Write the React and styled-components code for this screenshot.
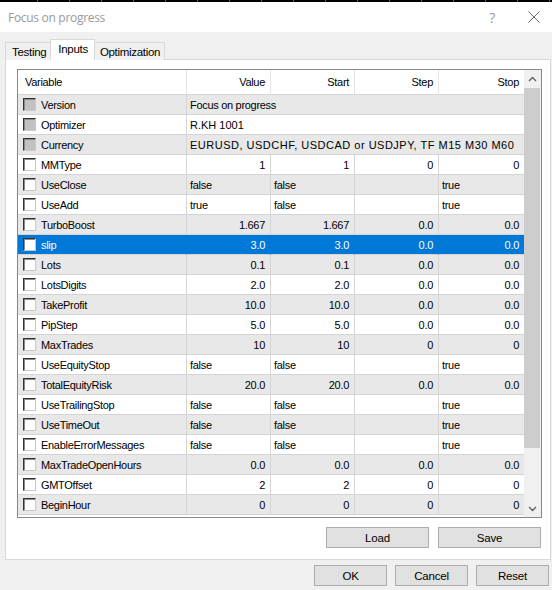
import React from 'react';
import styled, { createGlobalStyle, css } from 'styled-components';

const UI_FONT = `"Liberation Sans", Arial, sans-serif`;

const Global = createGlobalStyle`
  html, body {
    margin: 0;
    padding: 0;
    background: #f0f0f0;
  }
  body {
    font-family: ${UI_FONT};
    font-size: 11px;
    letter-spacing: -0.3px;
    color: #000;
  }
`;

const Window = styled.div`
  width: 552px;
  height: 590px;
  background: #f0f0f0;
  display: flex;
  flex-direction: column;
  overflow: hidden;
`;

const TopStrip = styled.div`
  height: 2px;
  background: repeating-linear-gradient(
    to right,
    #000 0px,
    #000 31px,
    #6a6a6a 31px,
    #6a6a6a 32px
  );
  background-position: 6px 0;
`;

const TitleBar = styled.div`
  height: 30px;
  background: #fff;
  display: flex;
  align-items: center;
  justify-content: space-between;
  padding: 0 12px 0 8px;
`;

const Title = styled.span`
  font-family: "Open Sans", "Noto Sans", sans-serif;
  font-size: 12px;
  letter-spacing: -0.3px;
  color: #9a9a9a;
`;

const TitleButtons = styled.div`
  display: flex;
  align-items: center;
  gap: 33px;
`;

const Help = styled.span`
  font-family: "Open Sans", "Noto Sans", sans-serif;
  font-size: 14px;
  color: #9a9a9a;
`;

const Body = styled.div`
  flex: 1;
  display: flex;
  flex-direction: column;
  padding: 7px 2px 0 5px;
`;

const Tabs = styled.div`
  display: flex;
  align-items: flex-end;
  height: 21px;
  position: relative;
  z-index: 1;
  margin-bottom: -1px;
`;

const Tab = styled.div`
  box-sizing: border-box;
  height: 18px;
  padding: 0 4px 0 6px;
  border: 1px solid #d9d9d9;
  border-bottom: none;
  background: #f0f0f0;
  display: flex;
  align-items: center;
  font-size: 11.5px;
  margin-left: -1px;
  &:first-child {
    margin-left: 0;
  }
  ${(p) =>
    p.$active &&
    css`
      height: 21px;
      background: #fff;
      padding: 0 6px 3px 7px;
      margin-left: -1px;
      margin-right: -1px;
      position: relative;
      z-index: 2;
    `}
`;

const Panel = styled.div`
  box-sizing: border-box;
  width: 546px;
  height: 501px;
  background: #fff;
  border: 1px solid #d9d9d9;
  padding: 9px 9px 0 11px;
  display: flex;
  flex-direction: column;
`;

const List = styled.div`
  box-sizing: border-box;
  width: 525px;
  height: 449px;
  border: 1px solid #828790;
  display: flex;
  overflow: hidden;
  background: #fff;
`;

const Table = styled.div`
  width: 506px;
  display: flex;
  flex-direction: column;
  overflow: hidden;
`;

const COLS = '169px 84px 84px 84px 85px';

const HeaderRow = styled.div`
  display: grid;
  grid-template-columns: ${COLS};
  height: 25px;
  flex-shrink: 0;
`;

const HeaderCell = styled.div`
  box-sizing: border-box;
  display: flex;
  align-items: center;
  justify-content: ${(p) => (p.$left ? 'flex-start' : 'flex-end')};
  padding: ${(p) => (p.$left ? '0 0 0 7px' : '0 5px 0 0')};
  border-right: 1px solid #e5e5e5;
  border-bottom: 1px solid #d5d5d5;
  &:last-child {
    border-right: none;
  }
`;

const Row = styled.div`
  display: grid;
  grid-template-columns: ${COLS};
  height: 20px;
  flex-shrink: 0;
  background: ${(p) => (p.$selected ? '#0078d7' : p.$shade ? '#e8e8e8' : '#fff')};
  color: ${(p) => (p.$selected ? '#fff' : '#000')};
`;

const Cell = styled.div`
  box-sizing: border-box;
  display: flex;
  align-items: center;
  justify-content: ${(p) => (p.$num ? 'flex-end' : 'flex-start')};
  padding: ${(p) => (p.$num ? '0 5px 0 0' : '0 0 0 3px')};
  border-right: 1px solid ${(p) => (p.$selected ? '#0078d7' : '#d4d4d4')};
  border-bottom: 1px solid #d4d4d4;
  white-space: nowrap;
  overflow: hidden;
  grid-column: ${(p) => (p.$span ? `span ${p.$span}` : 'auto')};
  letter-spacing: ${(p) => (p.$spacing != null ? `${p.$spacing}px` : 'inherit')};
  &:last-child {
    border-right: none;
  }
`;

const NameCell = styled(Cell)`
  padding: 0 0 0 5px;
  gap: 5px;
`;

const Check = styled.span`
  box-sizing: border-box;
  width: 13px;
  height: 13px;
  flex-shrink: 0;
  border: 1px solid;
  border-color: #333 #c9c9c9 #c9c9c9 #333;
  box-shadow: inset 1px 1px 0 #8a8a8a;
  background: ${(p) => (p.$disabled ? '#c2c2c2' : '#fff')};
`;

const ScrollBar = styled.div`
  width: 17px;
  background: #f0f0f0;
  display: flex;
  flex-direction: column;
`;

const ArrowButton = styled.div`
  height: 17px;
  display: flex;
  align-items: center;
  justify-content: center;
  flex-shrink: 0;
`;

const Track = styled.div`
  flex: 1;
  padding: 1px 1px 0 0;
  display: flex;
  flex-direction: column;
`;

const Thumb = styled.div`
  height: 360px;
  background: #cdcdcd;
`;

const PanelButtons = styled.div`
  display: flex;
  justify-content: flex-end;
  gap: 9px;
  margin-top: 9px;
`;

const Button = styled.button`
  box-sizing: border-box;
  width: ${(p) => p.$w || 73}px;
  height: 21px;
  background: #e1e1e1;
  border: 1px solid #adadad;
  border-radius: 0;
  font-family: ${UI_FONT};
  font-size: 11.5px;
  letter-spacing: -0.2px;
  color: #000;
  padding: 0;
`;

const DialogButtons = styled.div`
  display: flex;
  justify-content: flex-end;
  gap: 8px;
  margin-top: 5px;
  padding-right: 1px;
`;

const Chevron = ({ up }) => (
  <svg width="9" height="6" viewBox="0 0 9 6">
    <polyline
      points={up ? '1,5 4.5,1.5 8,5' : '1,1 4.5,4.5 8,1'}
      fill="none"
      stroke="#606060"
      strokeWidth="1.4"
    />
  </svg>
);

const CloseIcon = () => (
  <svg width="12" height="12" viewBox="0 0 12 12">
    <path d="M0.5 0.5 L11.5 11.5 M11.5 0.5 L0.5 11.5" stroke="#6a6a6a" strokeWidth="1" />
  </svg>
);

// text inputs span the four value columns; spacing widens all-caps strings
const text = (name, value, spacing) => ({ name, text: value, spacing });
const num = (name, ...vals) => ({ name, vals, num: true });
const bool = (name, ...vals) => ({ name, vals });

const rows = [
  text('Version', 'Focus on progress'),
  text('Optimizer', 'R.KH 1001', 0),
  text('Currency', 'EURUSD, USDCHF, USDCAD or USDJPY, TF M15 M30 M60', 0.5),
  num('MMType', '1', '1', '0', '0'),
  bool('UseClose', 'false', 'false', '', 'true'),
  bool('UseAdd', 'true', 'false', '', 'true'),
  num('TurboBoost', '1.667', '1.667', '0.0', '0.0'),
  num('slip', '3.0', '3.0', '0.0', '0.0'),
  num('Lots', '0.1', '0.1', '0.0', '0.0'),
  num('LotsDigits', '2.0', '2.0', '0.0', '0.0'),
  num('TakeProfit', '10.0', '10.0', '0.0', '0.0'),
  num('PipStep', '5.0', '5.0', '0.0', '0.0'),
  num('MaxTrades', '10', '10', '0', '0'),
  bool('UseEquityStop', 'false', 'false', '', 'true'),
  num('TotalEquityRisk', '20.0', '20.0', '0.0', '0.0'),
  bool('UseTrailingStop', 'false', 'false', '', 'true'),
  bool('UseTimeOut', 'false', 'false', '', 'true'),
  bool('EnableErrorMessages', 'false', 'false', '', 'true'),
  num('MaxTradeOpenHours', '0.0', '0.0', '0.0', '0.0'),
  num('GMTOffset', '2', '2', '0', '0'),
  num('BeginHour', '0', '0', '0', '0'),
];

const SELECTED = 'slip';

const App = () => (
  <Window>
    <Global />
    <TopStrip />
    <TitleBar>
      <Title>Focus on progress</Title>
      <TitleButtons>
        <Help>?</Help>
        <CloseIcon />
      </TitleButtons>
    </TitleBar>
    <Body>
      <Tabs>
        <Tab>Testing</Tab>
        <Tab $active>Inputs</Tab>
        <Tab>Optimization</Tab>
      </Tabs>
      <Panel>
        <List>
          <Table>
            <HeaderRow>
              <HeaderCell $left>Variable</HeaderCell>
              <HeaderCell>Value</HeaderCell>
              <HeaderCell>Start</HeaderCell>
              <HeaderCell>Step</HeaderCell>
              <HeaderCell>Stop</HeaderCell>
            </HeaderRow>
            {rows.map((r, i) => {
              const sel = r.name === SELECTED;
              return (
                <Row key={r.name} $shade={i % 2 === 0} $selected={sel}>
                  <NameCell $selected={sel}>
                    <Check $disabled={!!r.text} />
                    {r.name}
                  </NameCell>
                  {r.text ? (
                    <Cell $span={4} $spacing={r.spacing}>
                      {r.text}
                    </Cell>
                  ) : (
                    r.vals.map((v, j) => (
                      <Cell key={j} $num={r.num} $selected={sel}>
                        {v}
                      </Cell>
                    ))
                  )}
                </Row>
              );
            })}
          </Table>
          <ScrollBar>
            <ArrowButton>
              <Chevron up />
            </ArrowButton>
            <Track>
              <Thumb />
            </Track>
            <ArrowButton>
              <Chevron />
            </ArrowButton>
          </ScrollBar>
        </List>
        <PanelButtons>
          <Button $w={103}>Load</Button>
          <Button $w={103}>Save</Button>
        </PanelButtons>
      </Panel>
      <DialogButtons>
        <Button>OK</Button>
        <Button>Cancel</Button>
        <Button>Reset</Button>
      </DialogButtons>
    </Body>
  </Window>
);

export default App;
